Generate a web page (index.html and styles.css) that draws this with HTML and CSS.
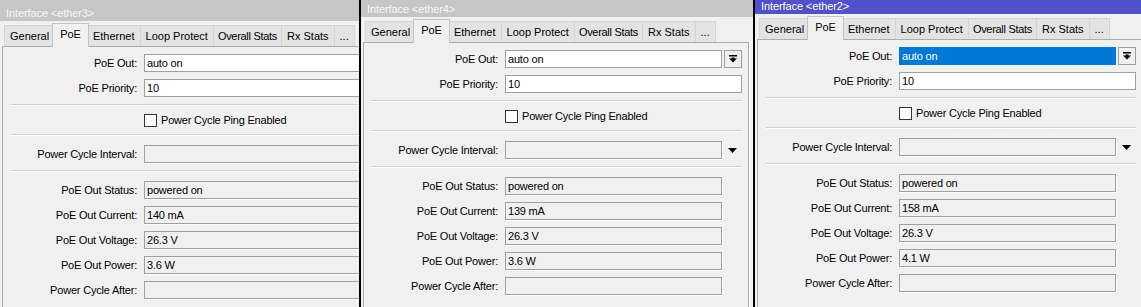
FILE: index.html
```html
<!DOCTYPE html>
<html lang="en">
<head>
  <meta charset="UTF-8" />
  <title>Interface PoE</title>
  <link rel="stylesheet" href="styles.css">
</head>
<body>

<div class="desk">

  <!-- ether3, partly hidden under ether4 -->
  <div class="clip clip-1">
    <div class="win">
      <div class="titlebar">Interface &lt;ether3&gt;</div>
      <div class="body">
        <div class="tabs">
          <span class="tab">General</span><span class="tab on">PoE</span><span class="tab">Ethernet</span><span class="tab">Loop Protect</span><span class="tab tight">Overall Stats</span><span class="tab">Rx Stats</span><span class="tab">...</span>
        </div>
        <div class="panel">
          <div class="row"><label>PoE Out:</label><div class="field edit">auto on</div><span class="dd-btn"><svg width="8" height="8" viewBox="0 0 8 8"><rect x="0" y="0" width="8" height="1.5" /><rect x="2.5" y="2.5" width="3" height="1.5" /><polygon points="0,3.5 8,3.5 4,7.5" /></svg></span></div>
          <div class="row"><label>PoE Priority:</label><div class="field edit wide">10</div></div>
          <hr class="sep">
          <div class="check-row"><span class="box"></span>Power Cycle Ping Enabled</div>
          <hr class="sep sep-wide">
          <div class="row"><label>Power Cycle Interval:</label><div class="field"></div><svg class="dd-arrow" width="9" height="5" viewBox="0 0 9 5"><polygon points="0,0 9,0 4.5,5" /></svg></div>
          <hr class="sep sep-wide">
          <div class="row"><label>PoE Out Status:</label><div class="field">powered on</div></div>
          <div class="row"><label>PoE Out Current:</label><div class="field">140 mA</div></div>
          <div class="row"><label>PoE Out Voltage:</label><div class="field">26.3 V</div></div>
          <div class="row"><label>PoE Out Power:</label><div class="field">3.6 W</div></div>
          <div class="row"><label>Power Cycle After:</label><div class="field"></div></div>
        </div>
      </div>
    </div>
  </div>

  <!-- ether4 -->
  <div class="clip clip-2">
    <div class="win">
      <div class="titlebar">Interface &lt;ether4&gt;</div>
      <div class="body">
        <div class="tabs">
          <span class="tab">General</span><span class="tab on">PoE</span><span class="tab">Ethernet</span><span class="tab">Loop Protect</span><span class="tab tight">Overall Stats</span><span class="tab">Rx Stats</span><span class="tab">...</span>
        </div>
        <div class="panel">
          <div class="row"><label>PoE Out:</label><div class="field edit">auto on</div><span class="dd-btn"><svg width="8" height="8" viewBox="0 0 8 8"><rect x="0" y="0" width="8" height="1.5" /><rect x="2.5" y="2.5" width="3" height="1.5" /><polygon points="0,3.5 8,3.5 4,7.5" /></svg></span></div>
          <div class="row"><label>PoE Priority:</label><div class="field edit wide">10</div></div>
          <hr class="sep">
          <div class="check-row"><span class="box"></span>Power Cycle Ping Enabled</div>
          <hr class="sep sep-wide">
          <div class="row"><label>Power Cycle Interval:</label><div class="field"></div><svg class="dd-arrow" width="9" height="5" viewBox="0 0 9 5"><polygon points="0,0 9,0 4.5,5" /></svg></div>
          <hr class="sep sep-wide">
          <div class="row"><label>PoE Out Status:</label><div class="field">powered on</div></div>
          <div class="row"><label>PoE Out Current:</label><div class="field">139 mA</div></div>
          <div class="row"><label>PoE Out Voltage:</label><div class="field">26.3 V</div></div>
          <div class="row"><label>PoE Out Power:</label><div class="field">3.6 W</div></div>
          <div class="row"><label>Power Cycle After:</label><div class="field"></div></div>
        </div>
      </div>
    </div>
  </div>

  <!-- ether2, the focused one -->
  <div class="clip clip-3">
    <div class="win active">
      <div class="titlebar">Interface &lt;ether2&gt;</div>
      <div class="body">
        <div class="tabs">
          <span class="tab">General</span><span class="tab on">PoE</span><span class="tab">Ethernet</span><span class="tab">Loop Protect</span><span class="tab tight">Overall Stats</span><span class="tab">Rx Stats</span><span class="tab">...</span>
        </div>
        <div class="panel">
          <div class="row"><label>PoE Out:</label><div class="field edit sel">auto on</div><span class="dd-btn"><svg width="8" height="8" viewBox="0 0 8 8"><rect x="0" y="0" width="8" height="1.5" /><rect x="2.5" y="2.5" width="3" height="1.5" /><polygon points="0,3.5 8,3.5 4,7.5" /></svg></span></div>
          <div class="row"><label>PoE Priority:</label><div class="field edit wide">10</div></div>
          <hr class="sep">
          <div class="check-row"><span class="box"></span>Power Cycle Ping Enabled</div>
          <hr class="sep sep-wide">
          <div class="row"><label>Power Cycle Interval:</label><div class="field"></div><svg class="dd-arrow" width="9" height="5" viewBox="0 0 9 5"><polygon points="0,0 9,0 4.5,5" /></svg></div>
          <hr class="sep sep-wide">
          <div class="row"><label>PoE Out Status:</label><div class="field">powered on</div></div>
          <div class="row"><label>PoE Out Current:</label><div class="field">158 mA</div></div>
          <div class="row"><label>PoE Out Voltage:</label><div class="field">26.3 V</div></div>
          <div class="row"><label>PoE Out Power:</label><div class="field">4.1 W</div></div>
          <div class="row"><label>Power Cycle After:</label><div class="field"></div></div>
        </div>
      </div>
    </div>
  </div>

</div>

</body>
</html>
```

FILE: styles.css
```css
body {
  margin: 0;
  background: #f0f0f0;
  font-family: "Liberation Sans", Arial, sans-serif;
  font-size: 11px;
  letter-spacing: -0.2px;
  color: #000;
}
.desk {
  display: flex;
  height: 307px;
  overflow: hidden;
}
.clip {
  height: 307px;
  overflow: hidden;
}
.clip-1 {
  width: 359px;
}
.clip-2 {
  width: 392px;
  border-left: 2px solid #000;
}
.clip-3 {
  flex: 1;
  border-left: 2px solid #000;
}
.clip-2 .win {
  margin-top: -4px;
}
.clip-3 .win {
  margin-top: -7px;
}
.win {
  width: 392px;
  background: #f0f0f0;
}
.titlebar {
  height: 21px;
  box-sizing: border-box;
  padding: 6px 0 0 6px;
  line-height: 14px;
  letter-spacing: -0.1px;
  background: #c6c6c6;
  color: #f6f6f6;
  white-space: nowrap;
}
.win.active .titlebar {
  background: #5050cb;
  color: #fff;
}
.body {
  padding: 4px 4px 0 2px;
}
.tabs {
  display: flex;
  align-items: flex-end;
  height: 21px;
  padding-left: 2px;
  letter-spacing: 0;
  position: relative;
  z-index: 1;
}
.tab {
  height: 20px;
  line-height: 20px;
  padding: 0 5px;
  background: #e3e3e3;
  border: 1px solid #d4d4d4;
  border-bottom: none;
  margin-right: -1px;
  white-space: nowrap;
}
.tab.tight {
  padding: 0 4px;
  letter-spacing: -0.3px;
}
.tab.on {
  height: 23px;
  line-height: 20px;
  margin: 0 -2px 0 -2px;
  padding: 0 7px;
  background: #f0f0f0;
  border-color: #c4c4c4;
  position: relative;
  top: 1px;
  z-index: 2;
}
.panel {
  border: 1px solid #adadad;
  box-shadow: 1px 1px 0 #fff;
  padding: 7px 0 40px 0;
}
.row {
  display: flex;
  align-items: center;
  height: 18px;
  margin-bottom: 7px;
}
.row label {
  width: 134px;
  margin-right: 7px;
  text-align: right;
  white-space: nowrap;
}
.field {
  width: 217px;
  height: 18px;
  box-sizing: border-box;
  padding: 0 2px;
  line-height: 16px;
  border: 1px solid #a0a0a0;
  box-shadow: 1px 1px 0 #fff;
  white-space: nowrap;
}
.field.edit {
  background: #fff;
  box-shadow: none;
}
.field.wide {
  width: 237px;
}
.field.sel {
  background: #0078d7;
  border-color: #0078d7;
  color: #fff;
}
.dd-btn {
  display: flex;
  align-items: center;
  justify-content: center;
  width: 18px;
  height: 18px;
  box-sizing: border-box;
  margin-left: 2px;
  border: 1px solid #a0a0a0;
  background: #f0f0f0;
}
.dd-arrow {
  margin-left: 6px;
}
.sep {
  width: 370px;
  height: 0;
  margin: 1px 0 7px 8px;
  border: 0;
  border-top: 1px solid #d0d0d0;
  border-bottom: 1px solid #fff;
}
.sep-wide {
  margin-bottom: 9px;
}
.check-row {
  display: flex;
  align-items: center;
  height: 14px;
  padding-left: 141px;
  margin-bottom: 7px;
}
.box {
  width: 13px;
  height: 13px;
  box-sizing: border-box;
  margin-right: 4px;
  border: 1px solid #333;
  background: #fff;
}
```
